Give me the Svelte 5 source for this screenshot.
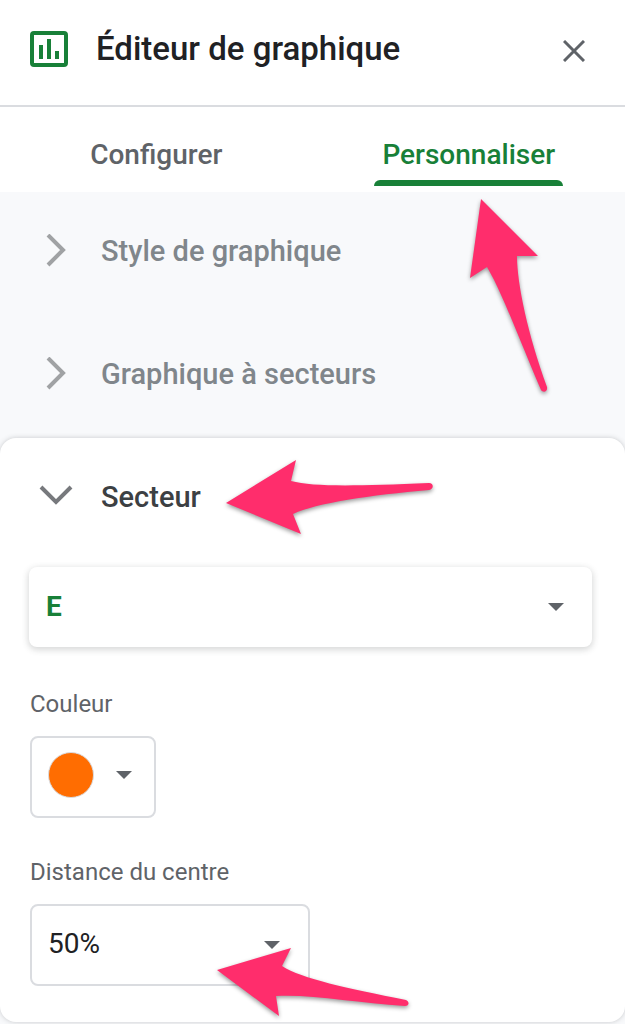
<script lang="ts">
	let tab = $state('customize');
	let open = $state('slice');
	let slice = $state('E');
	let distance = $state('50%');

	const tabs = [
		{ id: 'setup', label: 'Configurer' },
		{ id: 'customize', label: 'Personnaliser' }
	];

	const sections = [
		{ id: 'style', label: 'Style de graphique' },
		{ id: 'pie', label: 'Graphique à secteurs' }
	];

	const slices = ['A', 'B', 'C', 'D', 'E'];
	const distances = ['0%', '10%', '25%', '50%', '75%', '100%'];
</script>

{#snippet caret()}
	<svg class="caret" width="16" height="8" viewBox="0 0 16 8" aria-hidden="true">
		<path d="M0 0H16L8 8Z" fill="#5f6368" />
	</svg>
{/snippet}

<main class="editor">
	<header>
		<svg class="logo" width="38" height="36" viewBox="0 0 38 36" aria-hidden="true">
			<rect x="2" y="2" width="34" height="32" rx="2" fill="none" stroke="#188038" stroke-width="4" />
			<path d="M9 14h4v14H9zM17 8h4v20h-4zM25 20h4v8h-4z" fill="#188038" />
		</svg>
		<h1>Éditeur de graphique</h1>
		<button type="button" class="close" aria-label="Fermer">
			<svg width="22" height="22" viewBox="0 0 22 22" aria-hidden="true">
				<path d="M1 1L21 21M21 1L1 21" stroke="#5f6368" stroke-width="3" />
			</svg>
		</button>
	</header>

	<div class="tabs" role="tablist">
		{#each tabs as t}
			<div class="tab-cell">
				<button
					type="button"
					role="tab"
					class="tab"
					aria-selected={tab === t.id}
					onclick={() => (tab = t.id)}
				>
					{t.label}
				</button>
				{#if t.id === 'customize'}
					<svg class="pointer pointer-tab" width="100" height="210" viewBox="0 0 100 210" aria-hidden="true">
						<path d="M21 9L78 66H57C57 94 68 145 87 197C88 202 83 203 81 200C62 156 42 102 27 77L10 88Z" />
					</svg>
				{/if}
			</div>
		{/each}
	</div>

	<div class="sections">
		{#each sections as s}
			<button
				type="button"
				class="section-head"
				aria-expanded={open === s.id}
				onclick={() => (open = s.id)}
			>
				<svg width="34" height="34" viewBox="0 0 34 34" aria-hidden="true">
					<path d="M9 1L24 16L9 31" fill="none" stroke="#a0a2a4" stroke-width="4" />
				</svg>
				{s.label}
			</button>
		{/each}

		<section class="card">
			<div class="card-head">
				<button type="button" class="section-head current" aria-expanded="true">
					<svg width="34" height="34" viewBox="0 0 34 34" aria-hidden="true">
						<path d="M2 7L17 22L32 7" fill="none" stroke="#77797d" stroke-width="4" />
					</svg>
					Secteur
				</button>
				<svg class="pointer pointer-slice" width="226" height="94" viewBox="0 0 226 94" aria-hidden="true">
					<path d="M10 53L80 10L75 31C98 37 140 36 213 33C218 33 218 39 213 40C155 45 100 53 77 64L85 84Z" />
				</svg>
			</div>

			<div class="fields">
				<div class="select raised">
					<select bind:value={slice} aria-label="Secteur">
						{#each slices as name}
							<option>{name}</option>
						{/each}
					</select>
					{@render caret()}
				</div>

				<div class="field">
					<label for="color">Couleur</label>
					<button type="button" id="color" class="color">
						<span class="swatch"></span>
						{@render caret()}
					</button>
				</div>

				<div class="field">
					<label for="distance">Distance du centre</label>
					<div class="select outlined">
						<select id="distance" bind:value={distance}>
							{#each distances as d}
								<option>{d}</option>
							{/each}
						</select>
						{@render caret()}
						<svg class="pointer pointer-distance" width="210" height="88" viewBox="0 0 210 88" aria-hidden="true">
							<path d="M10 32L84 10L75 28C95 41 140 50 199 62C203 64 202 68 198 68C150 65 105 56 69 58L72 78Z" />
						</svg>
					</div>
				</div>
			</div>
		</section>
	</div>
</main>

<style>
	:global(body) {
		margin: 0;
		background: #f8f9fa;
	}

	.editor {
		overflow: hidden;
		background: #fff;
		color: #202124;
		font-family: Roboto, 'Noto Sans', sans-serif;
	}

	button,
	select {
		box-sizing: border-box;
		margin: 0;
		padding: 0;
		border: 0;
		background: none;
		font: inherit;
		cursor: pointer;
	}

	svg {
		display: block;
		flex: none;
	}

	header {
		display: flex;
		align-items: center;
		box-sizing: border-box;
		height: 107px;
		padding: 0 30px 8px;
		border-bottom: 2px solid #dadce0;
	}

	h1 {
		flex: 1;
		margin: 0 0 0 28px;
		font-size: 33px;
		font-weight: 500;
		line-height: 40px;
	}

	.close {
		padding: 12px 10px 8px;
	}

	.tabs {
		display: grid;
		grid-template-columns: 1fr 1fr;
		height: 85px;
	}

	.tab-cell {
		position: relative;
		display: flex;
		justify-content: center;
	}

	.tab {
		position: relative;
		height: 79px;
		padding: 16px 8px 0;
		color: #5f6368;
		font-size: 28px;
		font-weight: 500;
	}

	.tab[aria-selected='true'] {
		color: #188038;
	}

	.tab[aria-selected='true']::after {
		content: '';
		position: absolute;
		right: 0;
		bottom: 0;
		left: 0;
		height: 6px;
		border-radius: 6px 6px 0 0;
		background: #188038;
	}

	.sections {
		display: flex;
		flex-direction: column;
		gap: 5px;
		padding-bottom: 2px;
		background: #f8f9fb;
	}

	.section-head {
		display: flex;
		align-items: center;
		gap: 28px;
		width: 100%;
		height: 118px;
		padding-left: 39px;
		color: #80868b;
		font-size: 29px;
		font-weight: 500;
		text-align: left;
	}

	.section-head.current {
		color: #3c4043;
	}

	.card {
		border-radius: 16px;
		background: #fff;
		box-shadow: 0 0 5px rgba(60, 64, 67, 0.25);
	}

	.card-head {
		position: relative;
	}

	.fields {
		display: flex;
		flex-direction: column;
		gap: 38px;
		padding: 11px 33px 36px 29px;
	}

	.field {
		display: flex;
		flex-direction: column;
		align-items: flex-start;
		gap: 16px;
		padding-left: 1px;
	}

	label {
		color: #5f6368;
		font-size: 24px;
		line-height: 32px;
	}

	.select {
		position: relative;
		border-radius: 8px;
		background: #fff;
	}

	.select select {
		display: block;
		width: 100%;
		height: 80px;
		padding: 0 48px 2px 17px;
		border-radius: 8px;
		color: #202124;
		font-size: 28px;
		appearance: none;
	}

	.select .caret {
		position: absolute;
		top: 50%;
		right: 28px;
		margin-top: -4px;
		pointer-events: none;
	}

	.raised {
		margin-bottom: 3px;
		box-shadow: 0 2px 6px 1px rgba(60, 64, 67, 0.2);
	}

	.raised select {
		color: #188038;
		font-weight: 700;
	}

	.outlined {
		box-sizing: border-box;
		width: 280px;
		max-width: 100%;
		border: 2px solid #dadce0;
	}

	.outlined select {
		height: 78px;
		padding: 0 48px 4px 16px;
	}

	.color {
		display: flex;
		align-items: center;
		gap: 22px;
		height: 82px;
		padding: 0 22px 4px 16px;
		border: 2px solid #dadce0;
		border-radius: 8px;
	}

	.swatch {
		box-sizing: border-box;
		width: 46px;
		height: 46px;
		border: 1px solid #dadce0;
		border-radius: 50%;
		background: #ff6d01;
	}

	/* Hand-drawn style arrows laid over the panel */
	.pointer {
		position: absolute;
		z-index: 1;
		fill: #ff2d6c;
		filter: drop-shadow(0 2px 2px rgba(0, 0, 0, 0.4));
		pointer-events: none;
	}

	.pointer-tab {
		top: 83px;
		left: 147px;
	}

	.pointer-slice {
		top: 12px;
		left: 216px;
	}

	.pointer-distance {
		top: 32px;
		left: 175px;
	}
</style>
